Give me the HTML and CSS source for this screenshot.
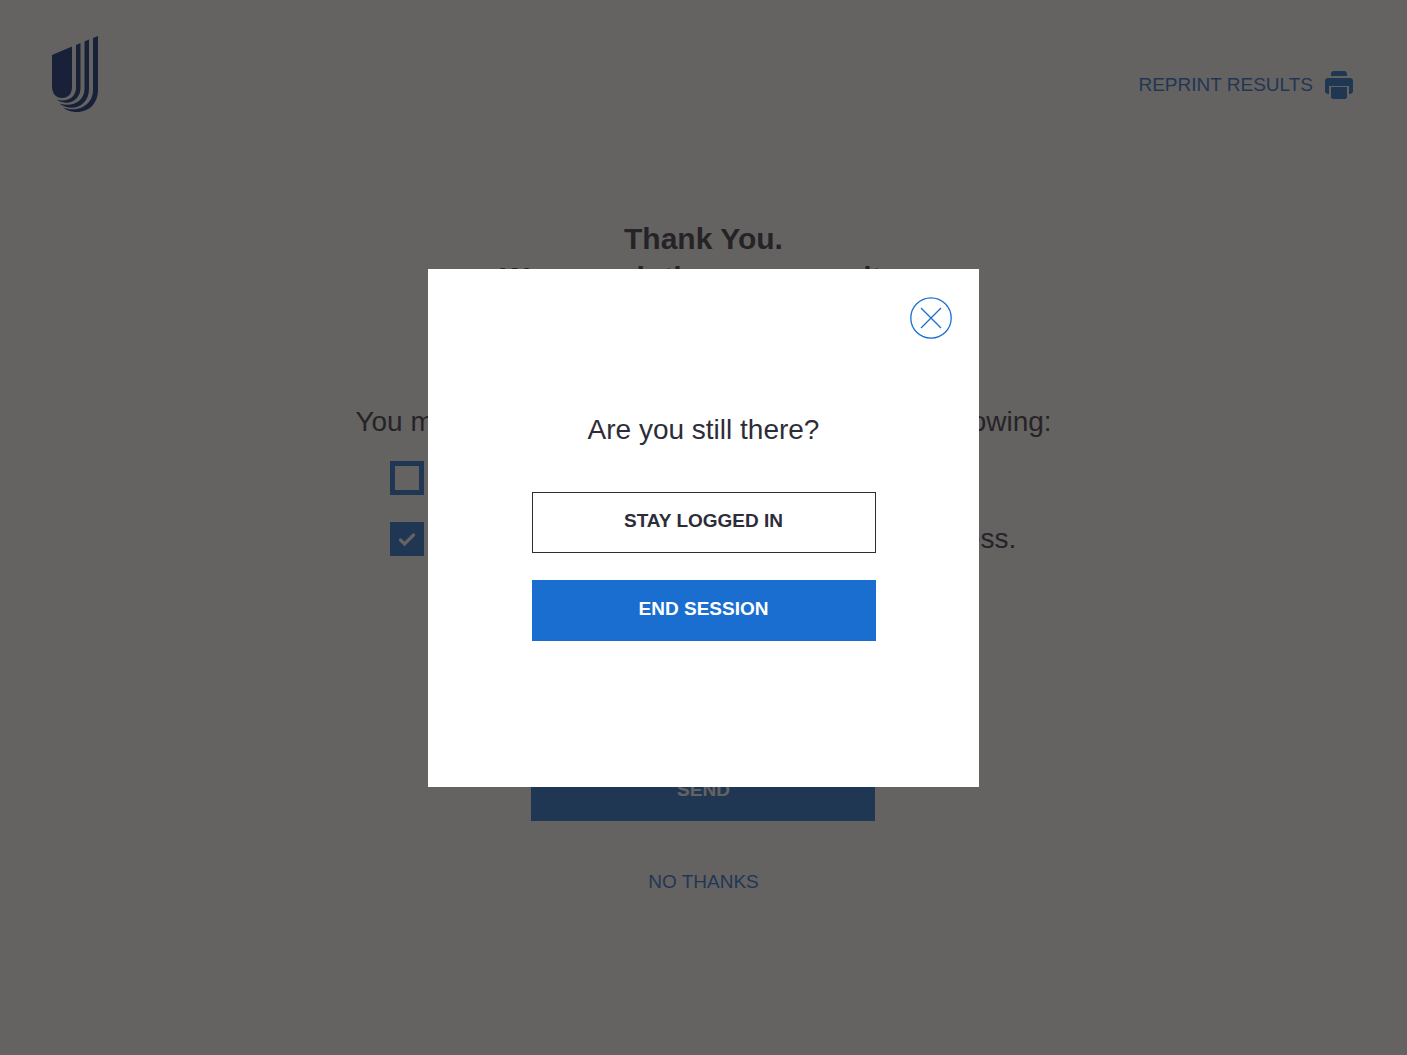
FILE: index.html
```html
<!DOCTYPE html>
<html lang="en">
<head>
<meta charset="utf-8">
<meta name="viewport" content="width=device-width, initial-scale=1">
<title>Thank You</title>
<link rel="stylesheet" href="styles.css">
</head>
<body>
<div class="page">
  <header class="header">
    <svg class="logo" viewBox="0 0 46 76" aria-label="Logo" role="img">
      <path d="M0 19L20 10.500V51C20 58 16 62 10 62C4 62 0 58 0 50Z"/>
      <path d="M24 9L28.500 7V52C28.500 62 20 68 12 66.500C9 66 6.500 65 4.500 63.500C15 67 24 61 24 52Z"/>
      <path d="M32.500 5.500L37 3.500V53C37 66 27 73 17 71.500C13 71 10 69.500 7.500 67.500C20 72 32.500 65 32.500 53Z"/>
      <path d="M41 2L46 0V54C46 69 35 77 23 76C18 75.500 14 74 11 71.500C26 77 41 69 41 54Z"/>
    </svg>
    <a class="link reprint" href="#reprint">REPRINT RESULTS
      <svg class="printer" viewBox="0 0 28 28" aria-hidden="true">
        <path d="M6 5V3Q6 0 9 0H19Q22 0 22 3V5Z"/>
        <path d="M3 7H25Q28 7 28 10V20Q28 23 24 23V15H4V23Q0 23 0 20V10Q0 7 3 7Z"/>
        <path d="M6 16H22V26Q22 28 20 28H8Q6 28 6 26Z"/>
      </svg>
    </a>
  </header>
  <main class="main">
    <h1 class="title">Thank You.<br>We are printing your results.</h1>
    <form class="form">
      <fieldset class="choices">
        <legend class="question">You may choose to receive your results by the following:</legend>
        <label class="choice"><input class="tick" type="checkbox">Text message</label>
        <label class="choice"><input class="tick" type="checkbox" checked>Send a copy of all results to my email address.</label>
      </fieldset>
      <button class="button button-primary" type="submit">SEND</button>
    </form>
    <a class="link" href="#done">NO THANKS</a>
  </main>
</div>
<div class="overlay">
  <section class="modal" role="dialog" aria-modal="true" aria-labelledby="prompt">
    <button class="close" type="button" aria-label="Close">
      <svg viewBox="0 0 42 42" aria-hidden="true"><circle cx="21" cy="21" r="20.200"/><path d="M11 11L31 31M31 11L11 31"/></svg>
    </button>
    <h2 class="prompt" id="prompt">Are you still there?</h2>
    <div class="actions">
      <button class="button button-outline" type="button">STAY LOGGED IN</button>
      <button class="button button-primary" type="button">END SESSION</button>
    </div>
  </section>
</div>
</body>
</html>
```
FILE: styles.css
```css
* { box-sizing: border-box; }

body {
  margin: 0;
  color: #2d2d39;
  background: #fff;
  font-family: "Liberation Sans", Arial, sans-serif;
}

.page { min-height: 100vh; }

.header {
  display: flex;
  justify-content: space-between;
  align-items: flex-start;
  padding: 36px 54px 0 52px;
}

.logo { width: 46px; height: 76px; fill: #002677; }

.link {
  color: #196ecf;
  font-size: 19px;
  line-height: 28px;
  text-decoration: none;
}

.reprint {
  display: flex;
  align-items: center;
  gap: 12px;
  margin-top: 35px;
}

.printer { width: 28px; height: 28px; fill: currentColor; }

.main {
  display: flex;
  flex-direction: column;
  align-items: center;
  padding: 107px 24px 48px;
}

.title {
  margin: 0 0 108px;
  font-size: 30px;
  line-height: 39px;
  text-align: center;
}

.form {
  display: flex;
  flex-direction: column;
  align-items: center;
}

.choices {
  margin: 0 0 204px;
  padding: 0;
  border: 0;
  font-size: 28px;
}

.question {
  padding: 0;
  margin-bottom: 22px;
  line-height: 34px;
}

.choice {
  display: flex;
  align-items: center;
  gap: 13px;
  margin: 0 0 27px 35px;
  line-height: 34px;
}

.choice:last-child { margin-bottom: 0; }

.tick {
  appearance: none;
  flex: none;
  width: 34px;
  height: 34px;
  margin: 0;
  border: 5px solid #196ecf;
}

.tick:checked {
  background: #196ecf url("data:image/svg+xml,%3Csvg xmlns='http://www.w3.org/2000/svg' viewBox='0 0 24 24'%3E%3Cpath d='M5.500 13L9.500 17L18.500 8' fill='none' stroke='white' stroke-width='3.200' stroke-linecap='round'/%3E%3C/svg%3E") center / 24px 24px no-repeat;
}

.button {
  width: 344px;
  height: 61px;
  padding: 0 16px 2px;
  border: 0;
  font: bold 19px "Liberation Sans", Arial, sans-serif;
}

.button-primary { color: #fff; background: #196ecf; }

.button-outline {
  color: #2d2d39;
  background: #fff;
  border: 1px solid #2d2d39;
}

.main > .link { margin-top: 47px; }

.overlay {
  position: fixed;
  inset: 0;
  display: grid;
  place-items: center;
  background: rgba(35, 32, 32, 0.7);
}

.modal {
  display: flex;
  flex-direction: column;
  align-items: center;
  width: 551px;
  max-width: 100%;
  padding: 28px 27px 146px;
  background: #fff;
}

.close {
  align-self: flex-end;
  width: 42px;
  height: 42px;
  padding: 0;
  border: 0;
  background: none;
}

.close svg {
  display: block;
  fill: none;
  stroke: #196ecf;
  stroke-width: 1.300;
}

.prompt {
  margin: 74px 0 45px;
  font-size: 28px;
  font-weight: normal;
  line-height: 34px;
}

.actions {
  display: flex;
  flex-direction: column;
  gap: 27px;
}
```
